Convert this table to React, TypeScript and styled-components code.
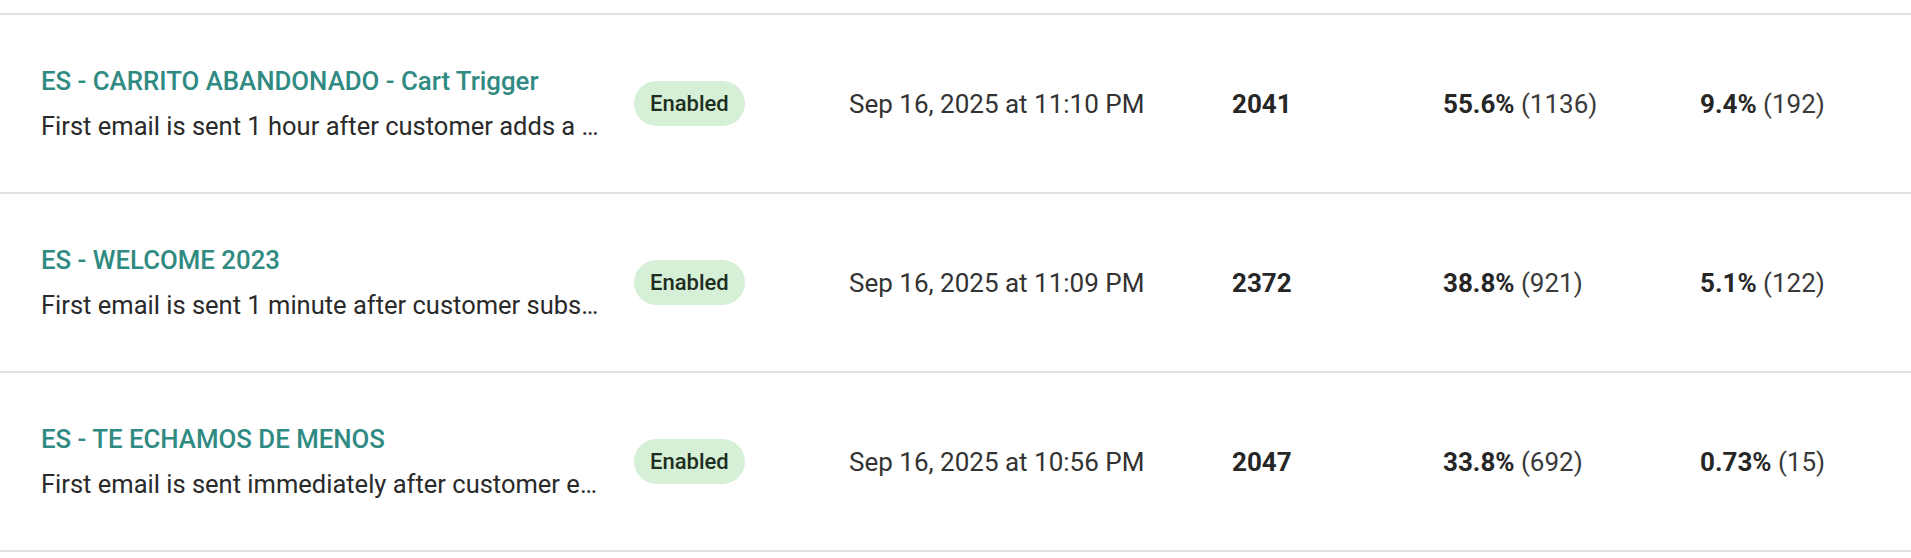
import React from "react";
import styled, { createGlobalStyle } from "styled-components";

const Global = createGlobalStyle`
  html, body { margin: 0; padding: 0; background: #ffffff; }
  body { font-family: Roboto, "Noto Sans", "Liberation Sans", sans-serif; -webkit-font-smoothing: antialiased; }
`;

const Table = styled.div`
  padding-top: 13px;
  width: 100%;
`;

const Row = styled.div`
  display: grid;
  grid-template-columns: 593px 215px 383px 211px 257px 1fr;
  align-items: center;
  height: 177px;
  padding-left: 41px;
  border-top: 2px solid #e2e2e2;
  &:last-child { border-bottom: 2px solid #e2e2e2; }
`;

const NameCell = styled.div`
  display: flex;
  flex-direction: column;
  gap: 15px;
  min-width: 0;
  padding-right: 28px;
`;

const Title = styled.a`
  font-size: 25.8px;
  line-height: 30px;
  font-weight: 500;
  color: #2f8a82;
  text-decoration: none;
  white-space: nowrap;
`;

const Description = styled.div`
  font-size: 25.5px;
  line-height: 30px;
  color: #2a2a2a;
  white-space: nowrap;
  overflow: hidden;
  text-overflow: ellipsis;
`;

const Badge = styled.span`
  justify-self: start;
  display: inline-flex;
  align-items: center;
  justify-content: center;
  height: 45px;
  padding: 0 16px;
  border-radius: 23px;
  background: #d6efd7;
  color: #1e2e20;
  font-size: 22px;
  font-weight: 500;
`;

const DateCell = styled.div`
  font-size: 26px;
  color: #333333;
`;

const Count = styled.div`
  font-size: 26px;
  font-weight: 700;
  color: #262626;
`;

const Rate = styled.div`
  font-size: 26px;
  color: #3a3a3a;
  b { font-weight: 700; color: #262626; }
`;

type Flow = {
  title: string;
  desc: string;
  date: string;
  count: string;
  open: [string, string];
  click: [string, string];
};

const flows: Flow[] = [
  {
    title: "ES - CARRITO ABANDONADO - Cart Trigger",
    desc: "First email is sent 1 hour after customer adds a product to the cart",
    date: "Sep 16, 2025 at 11:10 PM",
    count: "2041",
    open: ["55.6%", "(1136)"],
    click: ["9.4%", "(192)"],
  },
  {
    title: "ES - WELCOME 2023",
    desc: "First email is sent 1 minute after customer subscribes to the newsletter",
    date: "Sep 16, 2025 at 11:09 PM",
    count: "2372",
    open: ["38.8%", "(921)"],
    click: ["5.1%", "(122)"],
  },
  {
    title: "ES - TE ECHAMOS DE MENOS",
    desc: "First email is sent immediately after customer enters the segment",
    date: "Sep 16, 2025 at 10:56 PM",
    count: "2047",
    open: ["33.8%", "(692)"],
    click: ["0.73%", "(15)"],
  },
];

export default function App() {
  return (
    <>
      <Global />
      <Table>
        {flows.map((f) => (
          <Row key={f.title}>
            <NameCell>
              <Title href="#">{f.title}</Title>
              <Description>{f.desc}</Description>
            </NameCell>
            <div>
              <Badge>Enabled</Badge>
            </div>
            <DateCell>{f.date}</DateCell>
            <Count>{f.count}</Count>
            <Rate>
              <b>{f.open[0]}</b> {f.open[1]}
            </Rate>
            <Rate>
              <b>{f.click[0]}</b> {f.click[1]}
            </Rate>
          </Row>
        ))}
      </Table>
    </>
  );
}
